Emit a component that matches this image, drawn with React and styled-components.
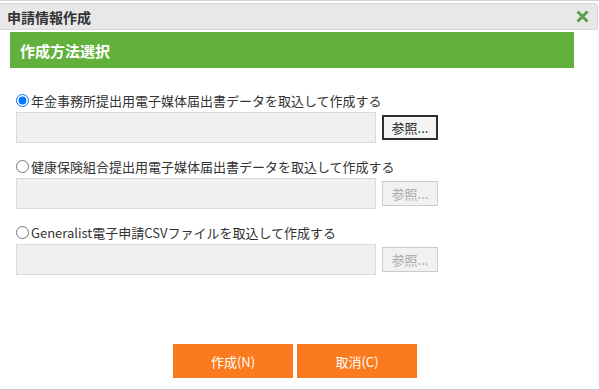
import React from "react";
import styled, { createGlobalStyle } from "styled-components";

const GlobalStyle = createGlobalStyle`
  html, body { margin: 0; padding: 0; background: #fff; }
  body {
    font-family: "Noto Sans CJK JP", "Noto Sans", sans-serif;
    color: #333;
  }
  * { box-sizing: border-box; }
`;

const Window = styled.div`
  width: 599px;
  height: 390px;
  border-top: 1px solid #d2d2d2;
  border-bottom: 1px solid #c8c8c8;
  padding-top: 2px;
  display: flex;
  flex-direction: column;
`;

const TitleBar = styled.div`
  height: 27px;
  margin-right: 1px;
  background: #e8e8e8;
  border: 1px solid #d8d8d8;
  border-left: none;
  border-radius: 0 4px 0 0;
  display: flex;
  align-items: center;
  justify-content: space-between;
  padding: 0 8px 0 7px;
`;

const Title = styled.span`
  font-size: 14px;
  font-weight: 700;
  color: #333;
  line-height: 1;
`;

const CloseButton = styled.button`
  border: none;
  background: none;
  padding: 0;
  width: 13px;
  height: 13px;
  display: flex;
  cursor: pointer;
`;

const Body = styled.div`
  padding: 2px 25px 0 10px;
  display: flex;
  flex-direction: column;
`;

const SectionHeader = styled.div`
  height: 36px;
  background: #62b13d;
  color: #fff;
  font-size: 15px;
  font-weight: 700;
  display: flex;
  align-items: center;
  padding-left: 10px;
`;

const Options = styled.div`
  margin-top: 22px;
  padding-left: 6px;
  display: flex;
  flex-direction: column;
  gap: 13px;
`;

const OptionGroup = styled.div`
  display: flex;
  flex-direction: column;
`;

const OptionLabel = styled.label`
  height: 20px;
  display: flex;
  align-items: center;
  font-size: 13px;
  color: #333;
  white-space: nowrap;
`;

const Radio = styled.input`
  width: 13px;
  height: 13px;
  margin: 0 2px 0 0;
`;

const InputRow = styled.div`
  margin-top: 2px;
  display: flex;
  align-items: center;
  gap: 6px;
`;

const FileBox = styled.div`
  width: 360px;
  height: 31px;
  background: #f0f0f0;
  border: 1px solid #dadada;
`;

const BrowseButton = styled.button`
  width: 56px;
  height: 25px;
  padding: 0;
  font-family: inherit;
  font-size: 13px;
  line-height: 1;
  background: ${(p) => (p.disabled ? "#f1f1f1" : "#f5f5f5")};
  color: ${(p) => (p.disabled ? "#a9a9a9" : "#222")};
  border: ${(p) => (p.disabled ? "1px solid #cbcbcb" : "2px solid #2e2e2e")};
`;

const Footer = styled.div`
  margin-top: 69px;
  padding-right: 9px;
  display: flex;
  justify-content: center;
  gap: 4px;
`;

const ActionButton = styled.button`
  width: 120px;
  height: 34px;
  border: none;
  background: #fc7a1e;
  color: #fff;
  font-family: inherit;
  font-size: 13px;
  cursor: pointer;
`;

const options = [
  { label: "年金事務所提出用電子媒体届出書データを取込して作成する", checked: true },
  { label: "健康保険組合提出用電子媒体届出書データを取込して作成する", checked: false },
  { label: "Generalist電子申請CSVファイルを取込して作成する", checked: false },
];

export default function App() {
  return (
    <>
      <GlobalStyle />
      <Window>
        <TitleBar>
          <Title>申請情報作成</Title>
          <CloseButton aria-label="close">
            <svg width="13" height="13" viewBox="0 0 13 13">
              <path d="M1.5 1.5 L11.5 11.5 M11.5 1.5 L1.5 11.5" stroke="#5aa046" strokeWidth="3" fill="none" />
            </svg>
          </CloseButton>
        </TitleBar>
        <Body>
          <SectionHeader>作成方法選択</SectionHeader>
          <Options>
            {options.map((o, i) => (
              <OptionGroup key={i}>
                <OptionLabel>
                  <Radio type="radio" name="method" defaultChecked={o.checked} />
                  {o.label}
                </OptionLabel>
                <InputRow>
                  <FileBox />
                  <BrowseButton disabled={!o.checked}>参照...</BrowseButton>
                </InputRow>
              </OptionGroup>
            ))}
          </Options>
        </Body>
        <Footer>
          <ActionButton>作成(N)</ActionButton>
          <ActionButton>取消(C)</ActionButton>
        </Footer>
      </Window>
    </>
  );
}
